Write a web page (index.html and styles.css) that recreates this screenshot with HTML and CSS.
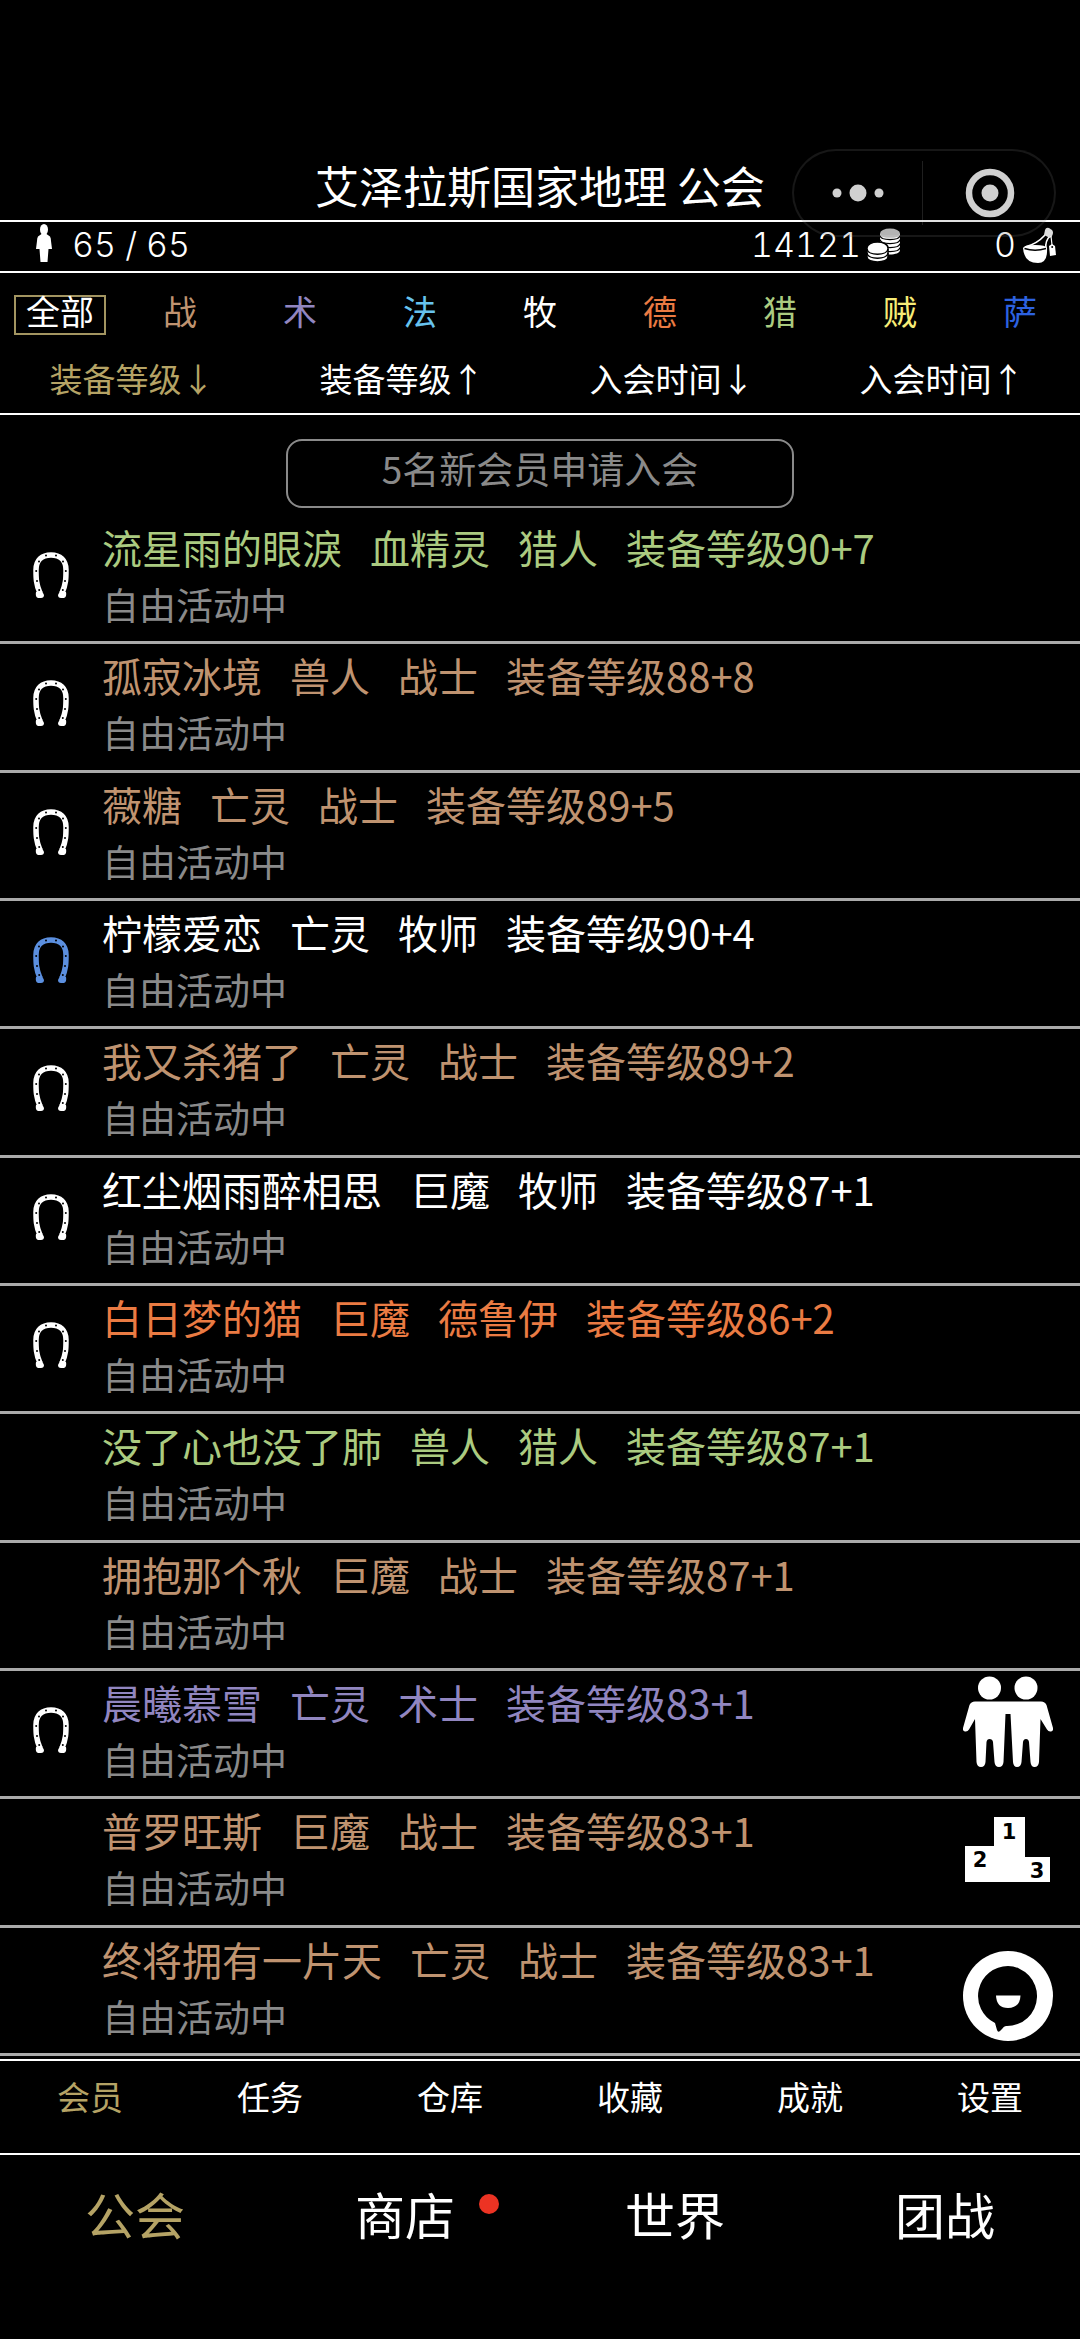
FILE: index.html
```html
<!DOCTYPE html>
<html lang="zh-CN">
<head>
    <meta charset="UTF-8">
    <meta name="viewport" content="width=device-width, initial-scale=1.0">
    <title>艾泽拉斯国家地理 公会</title>
    <link rel="stylesheet" href="styles.css">
</head>
<body>

    <!-- shared icon shapes -->
    <svg class="defs" width="0" height="0" aria-hidden="true">
        <symbol id="horseshoe" viewBox="0 0 36 46">
            <path d="M7 41 C3 32 3 26 3 18 C3 8 9 3 18 3 C27 3 33 8 33 18 C33 26 33 32 29 41" fill="none" stroke="currentColor" stroke-width="5.5"/>
            <path d="M3 40 L9 39 L11 43 Q11 46 8 46 L5 46 Q2 45 3 40 Z M33 40 L27 39 L25 43 Q25 46 28 46 L31 46 Q34 45 33 40 Z" fill="currentColor"/>
            <g fill="#000">
                <circle cx="13" cy="3.5" r="1"/><circle cx="23" cy="3.5" r="1"/>
                <circle cx="6" cy="9.5" r="1"/><circle cx="30" cy="9.5" r="1"/>
                <circle cx="3.2" cy="19" r="1"/><circle cx="32.8" cy="19" r="1"/>
                <circle cx="4" cy="29" r="1"/><circle cx="32" cy="29" r="1"/>
                <circle cx="6.2" cy="38" r="1"/><circle cx="29.8" cy="38" r="1"/>
            </g>
        </symbol>
    </svg>

    <div class="capsule">
        <button class="capsule-btn" aria-label="更多">
            <svg width="52" height="20" viewBox="0 0 52 20" fill="currentColor"><circle cx="5" cy="10" r="4.5"/><circle cx="26" cy="10" r="8.5"/><circle cx="47" cy="10" r="4.5"/></svg>
        </button>
        <button class="capsule-btn" aria-label="关闭">
            <svg width="50" height="50" viewBox="0 0 50 50"><circle cx="25" cy="25" r="21" fill="none" stroke="currentColor" stroke-width="6.5"/><circle cx="25" cy="25" r="8.5" fill="currentColor"/></svg>
        </button>
    </div>

    <header class="title-bar">
        <h1>艾泽拉斯国家地理 公会</h1>
    </header>

    <section class="stats">
        <div class="members">
            <svg width="16" height="38" viewBox="0 0 16 38" fill="#fff"><ellipse cx="8" cy="5.5" rx="4" ry="5.5"/><path d="M5.5 10 H10.5 L14 12.5 Q15 14 15 17 L16 25 H12.5 L11.5 38 H4.5 L3.5 25 H0 L1 17 Q1 14 2 12.5 Z"/></svg>
            <span>65 / 65</span>
        </div>
        <div class="gold">
            <span>14121</span>
            <svg width="34" height="34" viewBox="0 0 34 34">
                <path d="M13 6 V22 C13 28 33 28 33 22 V6 Z" fill="#fff"/>
                <ellipse cx="23" cy="5.5" rx="10" ry="5" fill="#ccc"/>
                <path d="M13 7.5 C14 13 32 13 33 7.5 M13 11.5 C14 17 32 17 33 11.5 M13 15.5 C14 21 32 21 33 15.5 M13 19.5 C14 25 32 25 33 19.5" fill="none" stroke="#000" stroke-width="1.3"/>
                <path d="M0 20 V29 C0 35.5 21 35.5 21 29 V20 C21 12 0 12 0 20 Z" fill="#fff" stroke="#000" stroke-width="1.5"/>
                <path d="M0 21 C1 28 20 28 21 21 M0 25 C1 32 20 32 21 25" fill="none" stroke="#000" stroke-width="1.5"/>
            </svg>
        </div>
        <div class="potion">
            <span>0</span>
            <svg width="34" height="36" viewBox="0 0 34 36">
                <path d="M23 8 Q15 17 3 20 M28 9 Q23 14 24 21" fill="none" stroke="#fff" stroke-width="1.6"/>
                <path d="M23 3 Q24 0 27 1 L30 3 Q32 5 30 9 L28 11 L22 8 Z" fill="#ddd"/>
                <path d="M1 21 Q2 18 13 18 Q24 18 25 21 Q26 36 16 36 Q2 36 1 21 Z" fill="#fff"/>
                <path d="M2.5 21.5 Q13 25 24 21.5" fill="none" stroke="#000" stroke-width="1.5"/>
                <path d="M29 9 L30 18" stroke="#fff" stroke-width="1.2"/>
                <path d="M27 19 L30 17 L33 19 L34 28 L28 29 Z" fill="#fff"/><circle cx="30.2" cy="20" r="1" fill="#000"/>
            </svg>
        </div>
    </section>

    <section class="filters">
        <div class="classes">
            <button class="selected">全部</button>
            <button class="warrior">战</button>
            <button class="warlock">术</button>
            <button class="mage">法</button>
            <button class="priest">牧</button>
            <button class="druid">德</button>
            <button class="hunter">猎</button>
            <button class="rogue">贼</button>
            <button class="shaman">萨</button>
        </div>
        <div class="sorts">
            <button class="active">装备等级↓</button>
            <button>装备等级↑</button>
            <button>入会时间↓</button>
            <button>入会时间↑</button>
        </div>
    </section>

    <main>
        <button class="apply">5名新会员申请入会</button>

        <ul class="members-list">
            <li>
                <svg class="shoe"><use href="#horseshoe"/></svg>
                <p class="name hunter"><span>流星雨的眼淚</span><span>血精灵</span><span>猎人</span><span>装备等级90+7</span></p>
                <p class="state">自由活动中</p>
            </li>
            <li>
                <svg class="shoe"><use href="#horseshoe"/></svg>
                <p class="name warrior"><span>孤寂冰境</span><span>兽人</span><span>战士</span><span>装备等级88+8</span></p>
                <p class="state">自由活动中</p>
            </li>
            <li>
                <svg class="shoe"><use href="#horseshoe"/></svg>
                <p class="name warrior"><span>薇糖</span><span>亡灵</span><span>战士</span><span>装备等级89+5</span></p>
                <p class="state">自由活动中</p>
            </li>
            <li>
                <svg class="shoe blue"><use href="#horseshoe"/></svg>
                <p class="name priest"><span>柠檬爱恋</span><span>亡灵</span><span>牧师</span><span>装备等级90+4</span></p>
                <p class="state">自由活动中</p>
            </li>
            <li>
                <svg class="shoe"><use href="#horseshoe"/></svg>
                <p class="name warrior"><span>我又杀猪了</span><span>亡灵</span><span>战士</span><span>装备等级89+2</span></p>
                <p class="state">自由活动中</p>
            </li>
            <li>
                <svg class="shoe"><use href="#horseshoe"/></svg>
                <p class="name priest"><span>红尘烟雨醉相思</span><span>巨魔</span><span>牧师</span><span>装备等级87+1</span></p>
                <p class="state">自由活动中</p>
            </li>
            <li>
                <svg class="shoe"><use href="#horseshoe"/></svg>
                <p class="name druid"><span>白日梦的猫</span><span>巨魔</span><span>德鲁伊</span><span>装备等级86+2</span></p>
                <p class="state">自由活动中</p>
            </li>
            <li>
                <p class="name hunter"><span>没了心也没了肺</span><span>兽人</span><span>猎人</span><span>装备等级87+1</span></p>
                <p class="state">自由活动中</p>
            </li>
            <li>
                <p class="name warrior"><span>拥抱那个秋</span><span>巨魔</span><span>战士</span><span>装备等级87+1</span></p>
                <p class="state">自由活动中</p>
            </li>
            <li>
                <svg class="shoe"><use href="#horseshoe"/></svg>
                <p class="name warlock"><span>晨曦慕雪</span><span>亡灵</span><span>术士</span><span>装备等级83+1</span></p>
                <p class="state">自由活动中</p>
            </li>
            <li>
                <p class="name warrior"><span>普罗旺斯</span><span>巨魔</span><span>战士</span><span>装备等级83+1</span></p>
                <p class="state">自由活动中</p>
            </li>
            <li>
                <p class="name warrior"><span>终将拥有一片天</span><span>亡灵</span><span>战士</span><span>装备等级83+1</span></p>
                <p class="state">自由活动中</p>
            </li>
        </ul>

        <div class="float-tools">
            <button aria-label="好友">
                <svg width="90" height="91" viewBox="0 0 90 91" fill="#fff">
                    <circle cx="26.5" cy="12" r="11.5"/><circle cx="63" cy="12" r="11.5"/>
                    <path d="M12 25.5 H78 Q82 25.5 83.5 29 L90 52 Q90.5 55 88 55.5 Q85.5 56 84 53.5 L77.5 43 L76 86 Q75.5 91 71.5 91 Q68 91 67.5 86 L66 66 Q65.5 63 63 63 Q60.5 63 60 66 L58.5 86 Q58 91 54 91 Q50.5 91 50 86 L47.5 38 H42.5 L40.5 86 Q40 91 36 91 Q32 91 31.5 86 L30 66 Q29.5 63 26.5 63 Q24 63 23.5 66 L22.5 86 Q22 91 18 91 Q14 91 13.5 86 L12 43 L6 53.5 Q4.5 56 2 55.5 Q-0.5 55 0 52 L6.5 29 Q8 25.5 12 25.5 Z"/>
                </svg>
            </button>
            <button aria-label="排行榜">
                <svg width="86" height="66" viewBox="0 0 86 66">
                    <path d="M0 29 H29 V0 H60 V40 H85 V65 H0 Z" fill="#fff"/>
                    <g class="rank"><text x="44" y="22">1</text><text x="15" y="50">2</text><text x="72" y="61">3</text></g>
                </svg>
            </button>
            <button aria-label="聊天">
                <svg width="90" height="90" viewBox="0 0 90 90">
                    <circle cx="45" cy="45" r="45" fill="#fff"/>
                    <path d="M45 15 A30 30 0 1 1 43 75 Q41 75 39 78 L37 80 Q35 82 34 79 L32 72 A30 30 0 0 1 45 15 Z"/>
                    <path d="M33 44.5 H57.5 Q57 57 45 57 Q33.5 57 33 44.5 Z" fill="#fff"/>
                </svg>
            </button>
        </div>
    </main>

    <nav class="tabs">
        <a href="#" class="active">会员</a>
        <a href="#">任务</a>
        <a href="#">仓库</a>
        <a href="#">收藏</a>
        <a href="#">成就</a>
        <a href="#">设置</a>
    </nav>

    <nav class="bottom-nav">
        <a href="#" class="active">公会</a>
        <a href="#">商店<i class="dot"></i></a>
        <a href="#">世界</a>
        <a href="#">团战</a>
    </nav>

</body>
</html>
```
FILE: styles.css
```css
* {
    box-sizing: border-box;
    margin: 0;
    padding: 0;
}

body {
    display: flex;
    flex-direction: column;
    min-height: 100vh;
    background: #000;
    color: #fff;
    font-family: "Noto Sans CJK SC", sans-serif;
    position: relative;
}

button {
    background: none;
    border: none;
    color: inherit;
    font: inherit;
    cursor: pointer;
}

a {
    color: inherit;
    text-decoration: none;
}

svg {
    display: block;
}

.defs {
    position: absolute;
}

/* mini program capsule, floats over the header */
.capsule {
    position: absolute;
    top: 149px;
    right: 24px;
    width: 264px;
    height: 88px;
    display: flex;
    border: 2px solid rgba(255, 255, 255, 0.09);
    border-radius: 44px;
    color: #d0d0d0;
    background: rgba(0, 0, 0, 0.12);
    z-index: 2;
}

.capsule-btn {
    flex: 1;
    display: flex;
    align-items: center;
    justify-content: center;
}

.capsule-btn + .capsule-btn {
    height: 64px;
    margin: auto 0;
    padding-left: 4px;
    border-left: 1px solid rgba(255, 255, 255, 0.12);
}

.title-bar {
    padding-top: 150px;
    border-bottom: 2px solid #fff;
    text-align: center;
}

.title-bar h1 {
    font-size: 44px;
    font-weight: 400;
    line-height: 70px;
}

.stats {
    display: flex;
    align-items: center;
    height: 51px;
    padding: 0 24px 4px 36px;
    border-bottom: 2px solid #fff;
    font-family: Inter, "Noto Sans CJK SC", sans-serif;
    font-size: 34px;
    font-weight: 300;
    font-variant-numeric: tabular-nums;
}

.stats div {
    display: flex;
    align-items: center;
}

.members {
    gap: 20px;
}

.members svg {
    align-self: flex-start;
}

.gold {
    margin-left: auto;
    gap: 6px;
}

.potion {
    width: 155px;
    justify-content: flex-end;
    gap: 6px;
}

.filters {
    border-bottom: 2px solid #fff;
    font-size: 34px;
    padding: 22px 0 8px;
}

.classes {
    display: grid;
    grid-template-columns: repeat(9, 1fr);
    justify-items: center;
}

.classes button {
    width: 92px;
    height: 40px;
    line-height: 28px;
    padding-bottom: 8px;
    border: 2px solid transparent;
}

.classes .selected {
    border-color: #a39561;
}

.sorts {
    display: grid;
    grid-template-columns: repeat(4, 1fr);
    margin-top: 16px;
}

.sorts button {
    padding-right: 6px;
    font-size: 33px;
    line-height: 54px;
}

main {
    flex: 1;
    display: flex;
    flex-direction: column;
    align-items: center;
    position: relative;
    padding-top: 24px;
}

.apply {
    width: 47%;
    height: 69px;
    padding-bottom: 10px;
    border: 2px solid #8a8a8a;
    border-radius: 16px;
    color: #8a8a8a;
    font-size: 37px;
    line-height: 55px;
}

.members-list {
    flex: 1;
    align-self: stretch;
    display: grid;
    grid-auto-rows: 1fr;
    margin: 8px 0 3px;
    list-style: none;
}

.members-list li {
    display: grid;
    grid-template-columns: 102px 1fr;
    grid-template-rows: 60px 54px;
    align-content: start;
    padding-top: 1px;
    border-bottom: 3px solid #aaa;
}

.shoe {
    grid-area: 1 / 1 / 3 / 2;
    place-self: center;
    width: 36px;
    height: 46px;
    margin-top: 2px;
}

.blue {
    color: #5b8fdf;
}

.name {
    grid-column: 2;
    display: flex;
    gap: 28px;
    font-size: 40px;
    line-height: 60px;
    white-space: nowrap;
}

.state {
    grid-column: 2;
    color: #8a8a8a;
    font-size: 37px;
    line-height: 54px;
}

.warrior { color: #bf9370; }
.warlock { color: #9186c0; }
.mage { color: #67c3ee; }
.priest { color: #fff; }
.druid { color: #ea7b43; }
.hunter { color: #abcb80; }
.rogue { color: #f7ec77; }
.shaman { color: #2d62e0; }
.active { color: #b5a365; }

.float-tools {
    position: absolute;
    right: 27px;
    bottom: 18px;
    display: flex;
    flex-direction: column;
    align-items: center;
    z-index: 1;
}

.float-tools button + button {
    margin-top: 50px;
}

.float-tools button:last-child {
    margin-top: 68px;
}

.rank {
    font: bold 21px "DejaVu Sans", sans-serif;
    text-anchor: middle;
}

.tabs {
    display: grid;
    grid-template-columns: repeat(6, 1fr);
    height: 96px;
    border-top: 2px solid #fff;
    border-bottom: 2px solid #fff;
    font-size: 33px;
    line-height: 70px;
    text-align: center;
}

.bottom-nav {
    display: grid;
    grid-template-columns: repeat(4, 1fr);
    height: 184px;
    font-size: 50px;
    line-height: 116px;
    text-align: center;
}

.bottom-nav a {
    position: relative;
}

.dot {
    position: absolute;
    top: 39px;
    right: 41px;
    width: 20px;
    height: 20px;
    border-radius: 50%;
    background: #ec3323;
}
```
